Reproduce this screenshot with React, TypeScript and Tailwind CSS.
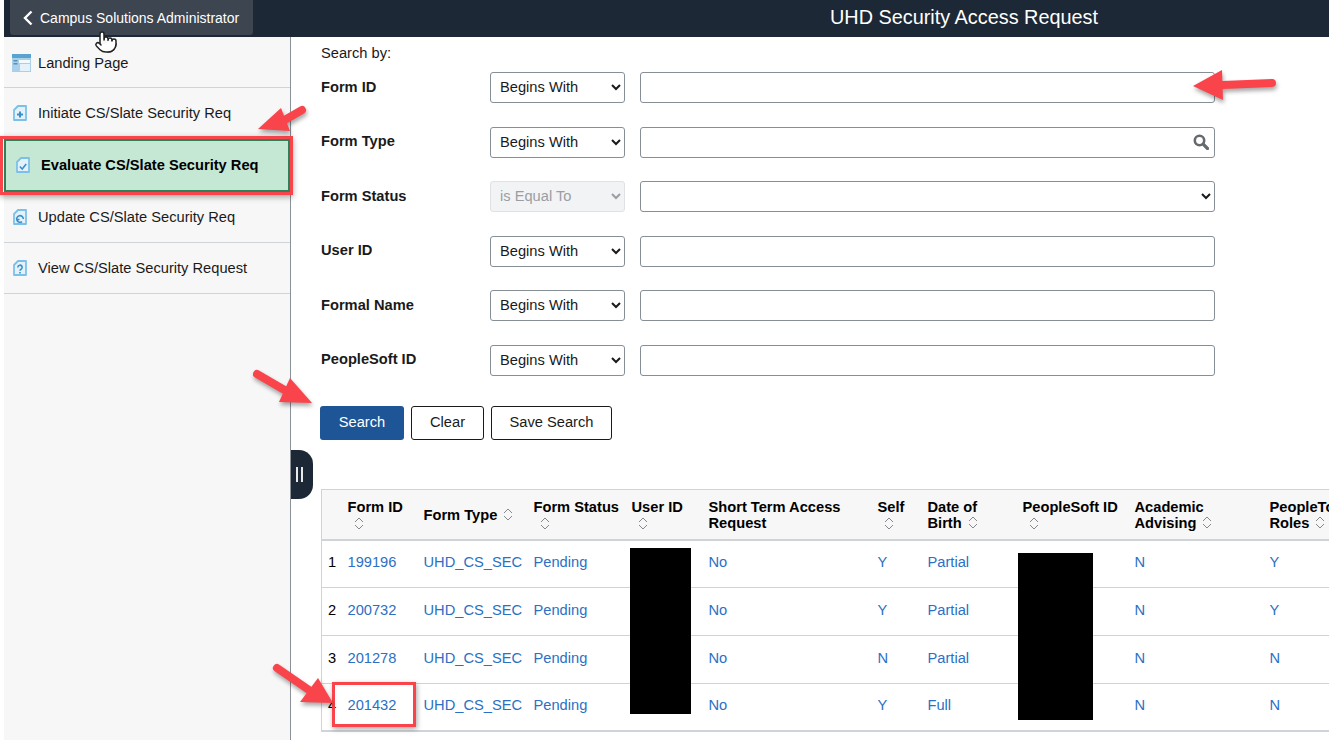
import { Pointer } from "lucide-react";

const FORM_ROWS = [
  { label: "Form ID", op: "Begins With" },
  { label: "Form Type", op: "Begins With", search: true },
  { label: "Form Status", op: "is Equal To", locked: true, dropdown: true },
  { label: "User ID", op: "Begins With" },
  { label: "Formal Name", op: "Begins With" },
  { label: "PeopleSoft ID", op: "Begins With" },
];

const RESULTS = [
  { n: 1, id: "199196", self: "Y", dob: "Partial", roles: "Y" },
  { n: 2, id: "200732", self: "Y", dob: "Partial", roles: "Y" },
  { n: 3, id: "201278", self: "N", dob: "Partial", roles: "N" },
  { n: 4, id: "201432", self: "Y", dob: "Full", roles: "N" },
];

const NAV = [
  { label: "Initiate CS/Slate Security Req", mark: "plus" },
  { label: "Evaluate CS/Slate Security Req", mark: "check", active: true },
  { label: "Update CS/Slate Security Req", mark: "loop", line: true },
  { label: "View CS/Slate Security Request", mark: "help", line: true },
];

const SortIcon = ({ className = "" }: { className?: string }) => (
  <svg viewBox="0 0 10 13" className={`inline-block h-[13px] w-[10px] ${className}`} fill="none" stroke="#85898f" strokeWidth="1">
    <path d="M1 5 5 1l4 4M1 8l4 4 4-4" />
  </svg>
);

const LandingIcon = () => (
  <svg viewBox="0 0 19 18" className="h-[18px] w-[19px]">
    <rect x="0" y="0" width="19" height="18" fill="#a9d0e8" />
    <rect x="0" y="0" width="19" height="4" fill="#5ba3cf" />
    <rect x="7" y="6" width="11" height="3" fill="#f4f9fc" />
    <rect x="8" y="10" width="10" height="7" fill="#e6f2f9" />
    <rect x="1.5" y="6" width="4" height="1.5" fill="#4c93c2" />
    <rect x="1.5" y="9" width="4" height="1.5" fill="#4c93c2" />
  </svg>
);

const DocIcon = ({ mark }: { mark: string }) => (
  <svg viewBox="0 0 14 16" className="h-4 w-[14px]" fill="none">
    <path d="M5 1h8v14H1V5z" fill="#e3f1fa" stroke="#7cc0ea" strokeWidth="1.8" strokeLinejoin="round" />
    {mark === "plus" && <path d="M7 6.5v6M4 9.5h6" stroke="#3a8fc7" strokeWidth="2" />}
    {mark === "check" && <path d="M3.8 9.5 6.2 12l4-5" stroke="#3a8fc7" strokeWidth="1.5" />}
    {mark === "loop" && <path d="M10.3 10a3.3 3.3 0 1 0-1.3 2.6M3.6 8.6l.4 2.6 2.4-1" stroke="#3a8fc7" strokeWidth="1.6" />}
    {mark === "help" && <path d="M4.8 7.4a2.2 2.2 0 1 1 3.3 1.9c-.7.4-1.1.8-1.1 1.5M7 12v1.6" stroke="#3a8fc7" strokeWidth="1.6" />}
  </svg>
);

const Arrow = ({ tail, tip, a, b }: { tail: number[]; tip: number[]; a: number[]; b: number[] }) => {
  const neck = [(a[0] + b[0]) / 2, (a[1] + b[1]) / 2];
  return (
    <g>
      <path d={`M${tail[0]} ${tail[1]}L${neck[0]} ${neck[1]}`} stroke="#f9444b" strokeWidth="8" strokeLinecap="round" />
      <path d={`M${tip[0]} ${tip[1]}L${a[0]} ${a[1]}L${b[0]} ${b[1]}Z`} fill="#f9444b" />
    </g>
  );
};

const Th = ({ children, className = "" }: { children: React.ReactNode; className?: string }) => (
  <th className={`pt-px pr-0 pl-[6px] text-left align-middle text-[14.67px] leading-4 font-bold text-black ${className}`}>{children}</th>
);

const Td = ({ children }: { children?: React.ReactNode }) => (
  <td className="pr-0 pb-[3px] pl-[6px] text-[14.67px] text-[#2b70c4]">{children}</td>
);

export default function App() {
  return (
    <div className="relative h-[740px] w-[1329px] overflow-hidden bg-white font-['Liberation_Sans',Arial,sans-serif] text-[14.67px] text-[#1a1a1a]">
      <header className="ml-1 flex h-[37px] items-start bg-[#1d2836]">
        <button className="ml-[6px] flex h-[35px] w-[243px] items-center rounded-b-[3px] bg-[#3d4550] pl-[13px] text-sm text-white">
          <svg viewBox="0 0 10 16" className="mr-[7px] h-4 w-[10px] shrink-0" fill="none" stroke="currentColor" strokeWidth="2.4">
            <path d="M8.5 1.5 2 8l6.5 6.5" />
          </svg>
          Campus Solutions Administrator
        </button>
        <h1 className="ml-[577px] text-[19.85px] leading-[35px] font-normal text-white">UHD Security Access Request</h1>
      </header>

      <div className="ml-1 flex h-[703px]">
        <nav className="w-[287px] shrink-0 border-r border-[#8b9199] bg-[#f7f7f7]">
          <a className="flex h-[51px] items-center gap-[7px] border-b border-[#d0d3d8] pt-[2px] pl-2">
            <LandingIcon />
            <span>Landing Page</span>
          </a>
          {NAV.map((item) =>
            item.active ? (
              <a
                key={item.label}
                className="relative flex h-[53px] items-center border-2 border-[#2f8059] bg-[#c5e8d5] pb-px pl-[8px] font-bold text-black"
              >
                <span className="ml-[2px] mr-[11px]">
                  <DocIcon mark={item.mark} />
                </span>
                {item.label}
                <span className="absolute -top-[5px] -right-[5px] -bottom-[5px] -left-[6px] border-[3px] border-[#f9444b] shadow-[0_2px_6px_rgba(0,0,0,0.35)]" />
              </a>
            ) : (
              <a
                key={item.label}
                className={`flex h-[51px] items-center pl-[9px] ${item.line ? "border-b border-[#d0d3d8]" : "pb-[1px]"}`}
              >
                <span className="mr-[11px]">
                  <DocIcon mark={item.mark} />
                </span>
                {item.label}
              </a>
            )
          )}
        </nav>

        <main className="min-w-0 flex-1 pl-[30px]">
          <p className="pt-[8px] pb-[10px] leading-[17px]">Search by:</p>

          <div className="flex flex-col gap-[23.5px]">
            {FORM_ROWS.map((row) => (
              <div key={row.label} className="flex h-[31px] items-center">
                <label className="mb-[2px] w-[169px] shrink-0 font-bold text-[#1a1a1a]">{row.label}</label>
                <select
                  disabled={row.locked}
                  defaultValue={row.op}
                  className={`h-[31px] w-[135px] rounded-[3px] border pb-px pl-[5px] ${
                    row.locked ? "border-[#dfe1e4] bg-[#f2f3f5] text-[#9a9ea3]" : "border-[#868e96] bg-white text-[#1a1a1a]"
                  }`}
                >
                  <option>{row.op}</option>
                </select>
                {row.dropdown ? (
                  <select className="ml-[15px] h-[31px] w-[575px] rounded-[3px] border border-[#868e96] bg-white">
                    <option></option>
                  </select>
                ) : (
                  <div className="relative ml-[15px] w-[575px]">
                    <input className="block h-[31px] w-full rounded-[3px] border border-[#868e96] bg-white" />
                    {row.search && (
                      <svg viewBox="0 0 16 16" className="absolute top-[7px] right-[6px] h-4 w-4" fill="none" stroke="#666a6e">
                        <circle cx="6.5" cy="6.5" r="4.7" strokeWidth="2.6" />
                        <path d="m10.2 10.2 4.3 4.3" strokeWidth="3.2" strokeLinecap="round" />
                      </svg>
                    )}
                  </div>
                )}
              </div>
            ))}
          </div>

          <div className="mt-[30px] -ml-px flex h-[34px] gap-[7px]">
            <button className="w-[84px] rounded-[3px] bg-[#1d5597] pb-[2px] text-white">Search</button>
            <button className="w-[73px] rounded-[3px] border border-[#1a1a1a] bg-white pb-[2px]">Clear</button>
            <button className="w-[121px] rounded-[3px] border border-[#1a1a1a] bg-white pb-[2px]">Save Search</button>
          </div>

          <table className="mt-[49px] w-[1120px] table-fixed border-collapse border-l border-[#d0d3d8]">
            <colgroup>
              <col className="w-[20px]" />
              <col className="w-[76px]" />
              <col className="w-[110px]" />
              <col className="w-[98px]" />
              <col className="w-[77px]" />
              <col className="w-[169px]" />
              <col className="w-[50px]" />
              <col className="w-[95px]" />
              <col className="w-[112px]" />
              <col className="w-[135px]" />
              <col className="w-[178px]" />
            </colgroup>
            <thead>
              <tr className="h-[51px] border-t border-b-2 border-[#d0d3d8] bg-[#f7f7f7]">
                <th />
                <Th>Form ID<br /><SortIcon className="ml-[6px]" /></Th>
                <Th>Form Type <SortIcon className="ml-[2px] align-[-1px]" /></Th>
                <Th>Form Status<br /><SortIcon className="ml-[6px]" /></Th>
                <Th>User ID<br /><SortIcon className="ml-[6px]" /></Th>
                <Th>Short Term Access<br />Request</Th>
                <Th>Self<br /><SortIcon className="ml-[6px]" /></Th>
                <Th>Date of<br />Birth <SortIcon className="ml-[2px] align-[-1px]" /></Th>
                <Th><span className="whitespace-nowrap">PeopleSoft ID</span><br /><SortIcon className="ml-[6px]" /></Th>
                <Th>Academic<br />Advising <SortIcon className="ml-[2px] align-[-1px]" /></Th>
                <Th><span className="whitespace-nowrap">PeopleTools</span><br />Roles <SortIcon className="ml-[2px] align-[-1px]" /></Th>
              </tr>
            </thead>
            <tbody>
              {RESULTS.map((row, i) => (
                <tr key={row.id} className={`border-[#d0d3d8] ${i === 0 ? "h-[47px]" : "h-[48px]"} ${i === 3 ? "border-b-2" : "border-b"}`}>
                  <td className="pb-[3px] pl-[6px] text-black">{row.n}</td>
                  <Td>{row.id}</Td>
                  <Td>UHD_CS_SEC</Td>
                  <Td>Pending</Td>
                  <Td />
                  <Td>No</Td>
                  <Td>{row.self}</Td>
                  <Td>{row.dob}</Td>
                  <Td />
                  <Td>N</Td>
                  <Td>{row.roles}</Td>
                </tr>
              ))}
            </tbody>
          </table>
        </main>
      </div>

      {/* sidebar collapse handle */}
      <div className="absolute top-[450px] left-[291px] flex h-[49px] w-[22px] items-center gap-[3px] rounded-r-[14px] bg-[#1d2836] pl-[5px]">
        <span className="h-[15px] w-[2px] bg-[#e8e9ea]" />
        <span className="h-[15px] w-[2px] bg-[#e8e9ea]" />
      </div>

      {/* redactions and annotations pasted over the page */}
      <div className="absolute top-[548px] left-[630px] h-[166px] w-[61px] bg-black" />
      <div className="absolute top-[553px] left-[1018px] h-[167px] w-[75px] bg-black" />
      <div className="absolute top-[682px] left-[332px] h-[45px] w-[84px] border-[3px] border-[#f9444b] shadow-[1px_2px_5px_rgba(0,0,0,0.35)]" />

      <svg viewBox="0 0 1329 740" className="pointer-events-none absolute inset-0 h-[740px] w-[1329px] drop-shadow-[1px_3px_2px_rgba(0,0,0,0.35)]">
        <Arrow tail={[302, 110]} tip={[258, 129]} a={[281, 108]} b={[290, 131]} />
        <Arrow tail={[1272, 83]} tip={[1193, 86]} a={[1222, 70]} b={[1223, 100]} />
        <Arrow tail={[257, 374]} tip={[312, 403]} a={[290, 378]} b={[279, 402]} />
        <Arrow tail={[277, 668]} tip={[333, 703]} a={[318, 678]} b={[300, 702]} />
      </svg>

      <Pointer size={24} strokeWidth={1.5} fill="#ffffff" className="absolute top-[30px] left-[94px] text-[#222]" />
    </div>
  );
}
